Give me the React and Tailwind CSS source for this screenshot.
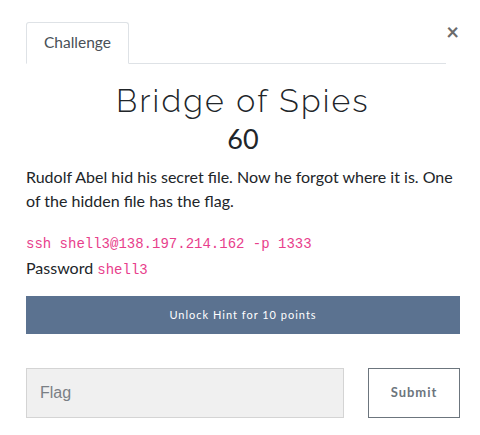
import React from "react";

const ChallengeModal = () => {
  return (
    <div className="w-[480px] h-[435px] bg-white relative" style={{ fontFamily: "Lato, sans-serif" }}>
      <button className="absolute right-[21px] top-[21px] text-[22px] leading-none text-[#6b6b6b] font-bold">
        ×
      </button>
      <div className="pl-[26px] pr-[34px] pt-[22px]">
        <div className="flex border-b border-[#dee2e6]">
          <div className="w-[103px] h-[42px] -mb-px border border-[#dee2e6] border-b-white rounded-t-[3px] bg-white flex items-center justify-center text-[15.5px] text-[#495057]">
            Challenge
          </div>
        </div>
      </div>
      <div className="px-[26px] pr-[20px]">
        <h2
          className="text-center text-[32px] font-light text-[#212529] tracking-[2.2px] mt-[17px] leading-[40px]"
          style={{ fontFamily: "Raleway, 'Open Sans', sans-serif" }}
        >
          Bridge of Spies
        </h2>
        <h3 className="text-center text-[27px] text-[#212529] leading-[32px] mt-[2px]">60</h3>
        <p className="text-[16px] text-[#212529] leading-[24px] mt-[10px]">
          Rudolf Abel hid his secret file. Now he forgot where it is. One of the hidden file has the flag.
        </p>
        <div className="mt-[17px] text-[16px] text-[#212529] leading-[24px]">
          <code className="text-[14px] text-[#e83e8c]" style={{ fontFamily: "'Liberation Mono', monospace" }}>
            ssh shell3@138.197.214.162 -p 1333
          </code>
          <br />
          Password{" "}
          <code className="text-[14px] text-[#e83e8c]" style={{ fontFamily: "'Liberation Mono', monospace" }}>
            shell3
          </code>
        </div>
        <button className="mt-[14px] w-full h-[38px] bg-[#5b7290] text-white text-[11px] tracking-[1px]">
          Unlock Hint for 10 points
        </button>
        <div className="mt-[34px] flex justify-between">
          <input
            placeholder="Flag"
            className="w-[318px] h-[50px] bg-[#f0f0f0] border border-[#d4d4d4] px-[13px] text-[16px] placeholder:text-[#7a7f85] outline-none"
            style={{ fontFamily: "'Liberation Sans', Arial, sans-serif" }}
          />
          <button className="w-[92px] h-[50px] border border-[#6c757d] text-[#6c757d] text-[13px] font-bold tracking-[1px] bg-white">
            Submit
          </button>
        </div>
      </div>
    </div>
  );
};

export default function App() {
  return <ChallengeModal />;
}
